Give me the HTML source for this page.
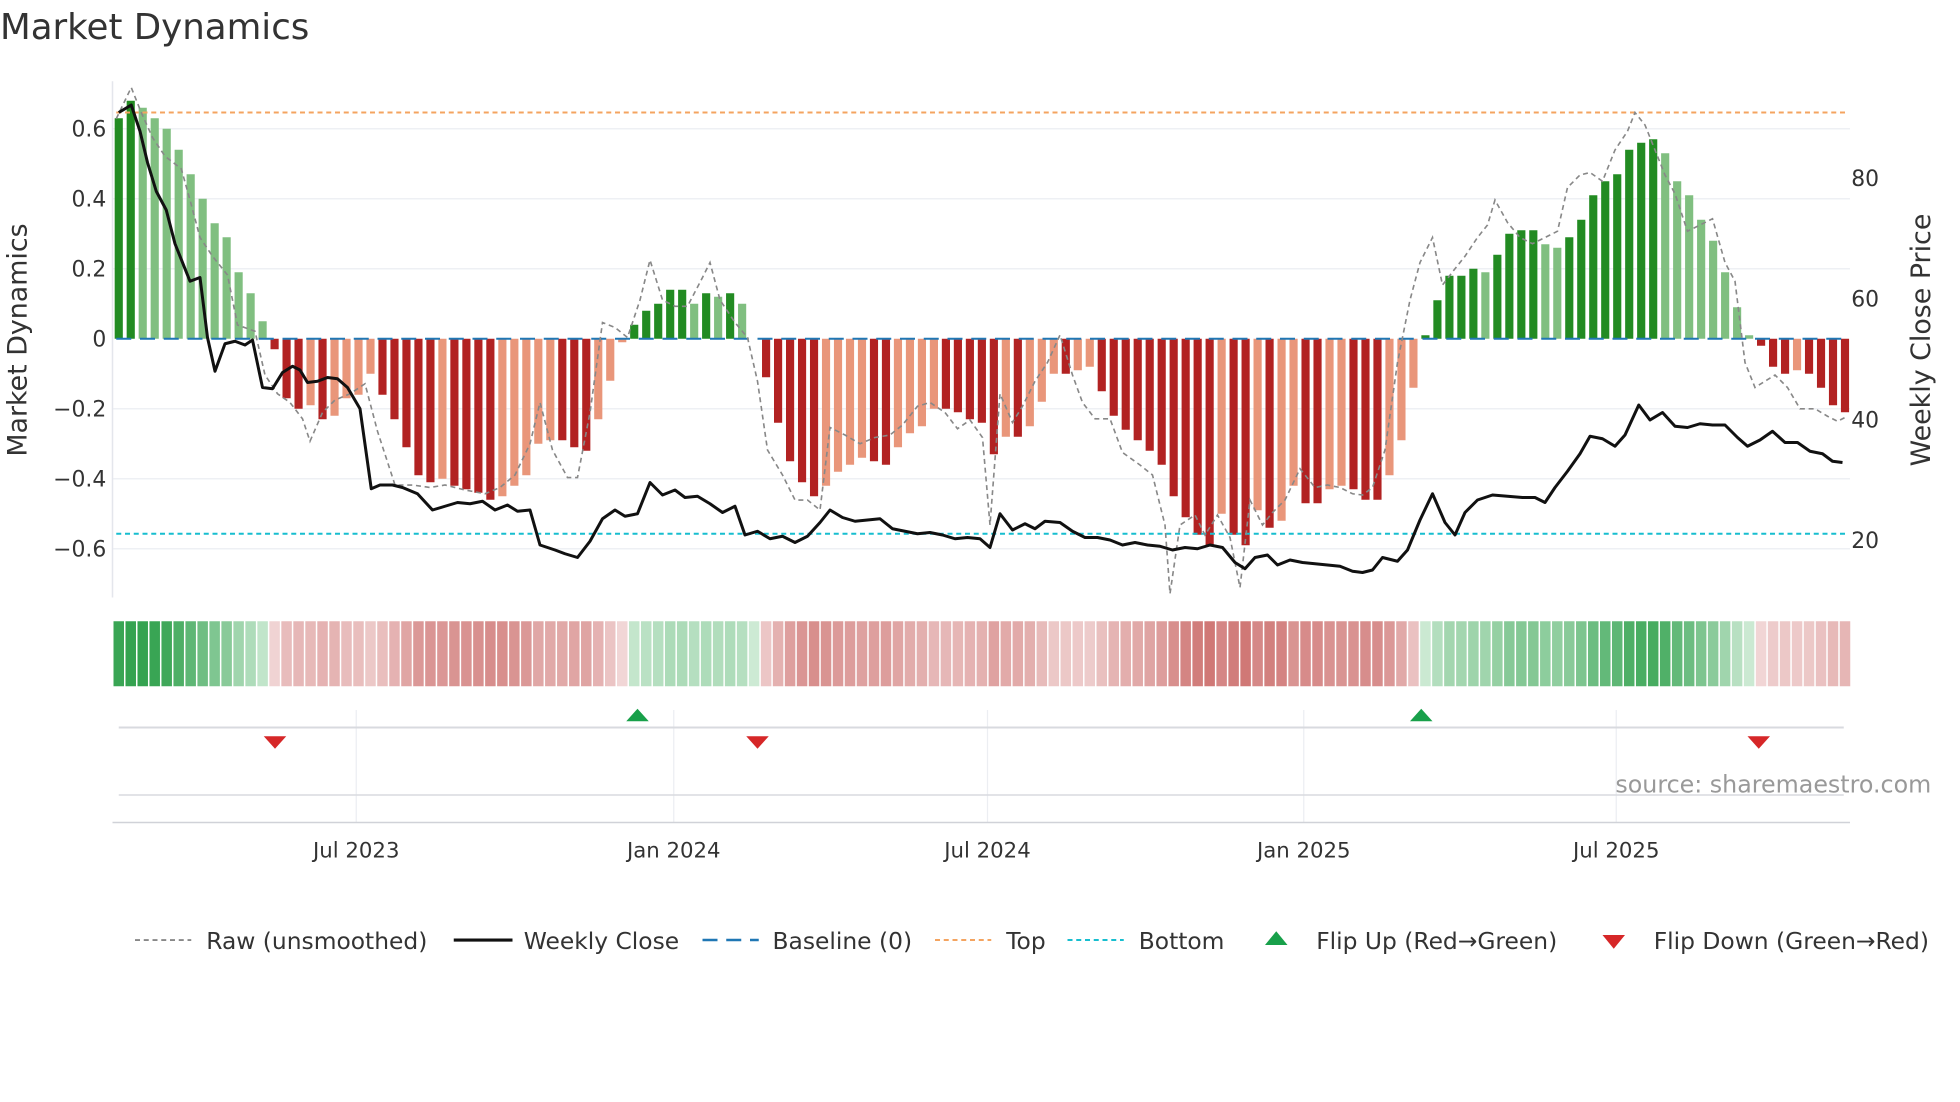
<!DOCTYPE html>
<html><head><meta charset="utf-8"><style>
html,body{margin:0;padding:0;background:#fff;width:1960px;height:1102px;overflow:hidden}
svg{display:block}
text{font-family:"DejaVu Sans","Liberation Sans",sans-serif;fill:#333}
</style></head><body>
<svg id="s" width="1960" height="1102" viewBox="0 0 1568 881.6" preserveAspectRatio="none" xmlns="http://www.w3.org/2000/svg">
<text x="0" y="31" font-size="28.5">Market Dynamics</text>
<g id="grid"></g>
<g id="bars"></g>
<g id="lines"></g>
<g id="heat"></g>
<g id="rest"></g>
</svg>
<script>
var NS="http://www.w3.org/2000/svg";
function el(p,t,a,txt){var e=document.createElementNS(NS,t);for(var k in a)e.setAttribute(k,a[k]);if(txt!=null)e.textContent=txt;document.getElementById(p).appendChild(e);return e;}
var vy=function(v){return 271-280*v;};
var py=function(p){return 529-4.83*p;};
[0.6,0.4,0.2,-0.2,-0.4,-0.6].forEach(function(v){el('grid','line',{x1:90,x2:1480,y1:vy(v),y2:vy(v),stroke:'#eef0f4','stroke-width':1.2});});
el('grid','line',{x1:90,x2:90,y1:65,y2:478,stroke:'#e4e6ec','stroke-width':1.2});
[0.6,0.4,0.2,0,-0.2,-0.4,-0.6].forEach(function(v){var s=v==0?'0':(v<0?'\u22120':'0')+Math.abs(v).toFixed(1).slice(1);el('grid','text',{x:85,y:vy(v)+6,'font-size':17.5,'text-anchor':'end'},s);});
[80,60,40,20].forEach(function(p){el('grid','text',{x:1481,y:py(p)+6,'font-size':17.5},String(p));});
el('grid','text',{x:0,y:0,'font-size':21.5,'text-anchor':'middle',transform:'translate(21,272) rotate(-90)'},'Market Dynamics');
el('grid','text',{x:0,y:0,'font-size':21.5,'text-anchor':'middle',transform:'translate(1544,272) rotate(-90)'},'Weekly Close Price');
var V=[0.63,0.68,0.66,0.63,0.6,0.54,0.47,0.4,0.33,0.29,0.19,0.13,0.05,-0.03,-0.17,-0.2,-0.19,-0.23,-0.22,-0.17,-0.16,-0.1,-0.16,-0.23,-0.31,-0.39,-0.41,-0.4,-0.42,-0.43,-0.44,-0.46,-0.45,-0.42,-0.39,-0.3,-0.29,-0.29,-0.31,-0.32,-0.23,-0.12,-0.01,0.04,0.08,0.1,0.14,0.14,0.1,0.13,0.12,0.13,0.1,0,-0.11,-0.24,-0.35,-0.41,-0.45,-0.42,-0.38,-0.36,-0.34,-0.35,-0.36,-0.31,-0.27,-0.25,-0.2,-0.2,-0.21,-0.23,-0.24,-0.33,-0.28,-0.28,-0.25,-0.18,-0.1,-0.1,-0.09,-0.08,-0.15,-0.22,-0.26,-0.29,-0.32,-0.36,-0.45,-0.51,-0.56,-0.59,-0.5,-0.56,-0.59,-0.49,-0.54,-0.52,-0.42,-0.47,-0.47,-0.43,-0.42,-0.43,-0.46,-0.46,-0.39,-0.29,-0.14,0.01,0.11,0.18,0.18,0.2,0.19,0.24,0.3,0.31,0.31,0.27,0.26,0.29,0.34,0.41,0.45,0.47,0.54,0.56,0.57,0.53,0.45,0.41,0.34,0.28,0.19,0.09,0.01,-0.02,-0.08,-0.1,-0.09,-0.1,-0.14,-0.19,-0.21];
var n=V.length,x0=95,x1=1476,st=(x1-x0)/(n-1),bw=st*0.68;
function mix(a,b,t){return 'rgb('+a.map(function(c,i){return Math.round(c+(b[i]-c)*t);}).join(',')+')';}
for(var i=0;i<n;i++){var v=V[i],x=x0+i*st,pv=i?V[i-1]:0,dark=Math.abs(v)>=Math.abs(pv)&&(v*pv>=0||i==0)||(v*pv<0);
 var c=v>=0?(dark?'#228b22':'#80bf80'):(dark?'#b22222':'#e9967a');
 var y=vy(v);el('bars','rect',{x:x-bw/2,y:Math.min(y,271),width:bw,height:Math.abs(y-271),fill:c});
 var t=Math.min(Math.abs(v)/0.65,1);
 var hc=v>=0?mix([205,234,212],[52,163,80],t):mix([242,216,216],[204,110,108],t);
 el('heat','rect',{x:x-st/2+0.6,y:497,width:st-1.2,height:52,fill:hc});}
el('lines','line',{x1:93,x2:1478,y1:90,y2:90,stroke:'#f4a460','stroke-width':1.6,'stroke-dasharray':'4,3'});
el('lines','line',{x1:93,x2:1478,y1:427,y2:427,stroke:'#17becf','stroke-width':1.6,'stroke-dasharray':'4,3'});
el('lines','line',{x1:93,x2:1478,y1:271,y2:271,stroke:'#1f77b4','stroke-width':1.6,'stroke-dasharray':'12,7'});
var R="93,95 105,70 113,90 122,110 132,125 145,135 152,160 160,190 170,205 182,220 190,260 204,265 212,300 222,315 232,322 242,335 248,353 258,330 268,320 280,315 292,307 302,345 316,388 330,388 344,390 356,388 372,392 388,395 400,390 412,380 424,355 432,322 442,360 454,382 462,382 472,330 482,258 492,262 502,270 512,240 520,208 530,240 540,245 550,245 562,222 568,210 576,240 588,258 598,270 606,305 614,360 626,380 636,400 646,400 656,408 664,342 676,348 688,355 700,350 712,348 722,340 734,325 744,322 756,330 766,343 776,336 786,350 792,420 800,315 810,338 818,325 828,305 838,290 848,268 858,300 866,322 876,335 888,335 898,362 912,372 922,380 932,420 936,475 944,420 956,412 964,428 974,412 984,430 992,470 1000,400 1010,420 1018,410 1028,400 1040,375 1052,390 1062,388 1072,390 1082,395 1090,396 1098,390 1108,360 1118,290 1128,240 1136,210 1146,190 1154,228 1164,215 1172,205 1182,190 1190,180 1196,160 1206,178 1216,190 1226,195 1236,190 1246,185 1254,150 1264,140 1272,138 1282,145 1292,120 1302,105 1308,90 1316,100 1324,120 1332,140 1340,155 1350,185 1360,180 1370,175 1380,210 1388,225 1396,290 1404,310 1412,305 1420,300 1430,310 1440,327 1452,327 1462,333 1470,337 1478,333";
el('lines','polyline',{points:R,fill:'none',stroke:'#888','stroke-width':1.3,'stroke-dasharray':'4,3'});
var C="95,90 105,84 112,105 118,130 125,153 133,168 140,195 152,225 160,222 166,270 172,297 180,275 188,273 196,276 202,272 210,310 218,311 226,298 234,293 240,296 246,306 254,305 262,302 270,303 278,310 288,327 297,391 304,388 314,388 322,390 334,395 346,408 356,405 366,402 376,403 386,401 396,408 406,404 414,409 424,408 432,436 444,440 452,443 462,446 472,433 482,415 492,408 500,413 510,411 520,386 530,396 540,392 548,398 558,397 568,403 578,410 588,405 596,428 606,425 616,431 626,429 636,434 646,429 656,418 664,408 674,414 684,417 694,416 704,415 714,423 724,425 734,427 744,426 754,428 764,431 774,430 784,431 792,438 800,411 810,424 820,419 828,423 836,417 848,418 858,425 868,430 878,430 888,432 898,436 908,434 918,436 928,437 938,440 948,438 958,439 968,436 978,438 988,450 996,455 1004,446 1014,444 1022,452 1032,448 1042,450 1052,451 1062,452 1072,453 1082,457 1090,458 1098,456 1106,446 1118,449 1126,440 1136,416 1146,395 1156,418 1164,428 1172,410 1182,400 1194,396 1206,397 1218,398 1228,398 1236,402 1244,390 1254,377 1264,363 1272,349 1282,351 1292,357 1300,348 1311,324 1320,336 1330,330 1340,341 1350,342 1360,339 1370,340 1380,340 1390,350 1398,357 1408,352 1418,345 1428,354 1438,354 1448,361 1458,363 1466,369 1474,370";
el('lines','polyline',{points:C,fill:'none',stroke:'#111','stroke-width':2.4,'stroke-linejoin':'round'});
[285,539,790,1043,1293].forEach(function(x){el('rest','line',{x1:x,x2:x,y1:568,y2:658,stroke:'#eceef2','stroke-width':1});});
el('rest','line',{x1:95,x2:1475,y1:582,y2:582,stroke:'#d8dadf','stroke-width':1.6});
el('rest','line',{x1:95,x2:1475,y1:636,y2:636,stroke:'#d8dadf','stroke-width':1.2});
el('rest','line',{x1:90,x2:1480,y1:658,y2:658,stroke:'#d0d2d8','stroke-width':1.2});
[[285,'Jul 2023'],[539,'Jan 2024'],[790,'Jul 2024'],[1043,'Jan 2025'],[1293,'Jul 2025']].forEach(function(a){el('rest','text',{x:a[0],y:686,'font-size':17,'text-anchor':'middle'},a[1]);});
[510,1137].forEach(function(x){el('rest','polygon',{points:(x-9)+',577 '+(x+9)+',577 '+x+',567',fill:'#18a04a'});});
[220,606,1407].forEach(function(x){el('rest','polygon',{points:(x-9)+',589 '+(x+9)+',589 '+x+',599',fill:'#d62728'});});
el('rest','text',{x:1545,y:634,'font-size':19,'text-anchor':'end',style:'fill:#999'},'source: sharemaestro.com');
var ly=752,fs=18.7;
el('rest','line',{x1:108,x2:153,y1:ly,y2:ly,stroke:'#888','stroke-width':1.5,'stroke-dasharray':'4,3'});
el('rest','text',{x:165,y:ly+7,'font-size':fs},'Raw (unsmoothed)');
el('rest','line',{x1:363,x2:410,y1:ly,y2:ly,stroke:'#111','stroke-width':2.5});
el('rest','text',{x:419,y:ly+7,'font-size':fs},'Weekly Close');
el('rest','line',{x1:562,x2:607,y1:ly,y2:ly,stroke:'#1f77b4','stroke-width':2,'stroke-dasharray':'12,7'});
el('rest','text',{x:618,y:ly+7,'font-size':fs},'Baseline (0)');
el('rest','line',{x1:748,x2:793,y1:ly,y2:ly,stroke:'#f4a460','stroke-width':1.6,'stroke-dasharray':'4,3'});
el('rest','text',{x:805,y:ly+7,'font-size':fs},'Top');
el('rest','line',{x1:854,x2:899,y1:ly,y2:ly,stroke:'#17becf','stroke-width':1.6,'stroke-dasharray':'4,3'});
el('rest','text',{x:911,y:ly+7,'font-size':fs},'Bottom');
el('rest','polygon',{points:'1012,756 1030,756 1021,745',fill:'#18a04a'});
el('rest','text',{x:1053,y:ly+7,'font-size':fs},'Flip Up (Red\u2192Green)');
el('rest','polygon',{points:'1282,748 1300,748 1291,759',fill:'#d62728'});
el('rest','text',{x:1323,y:ly+7,'font-size':fs},'Flip Down (Green\u2192Red)');
</script>
</body></html>
